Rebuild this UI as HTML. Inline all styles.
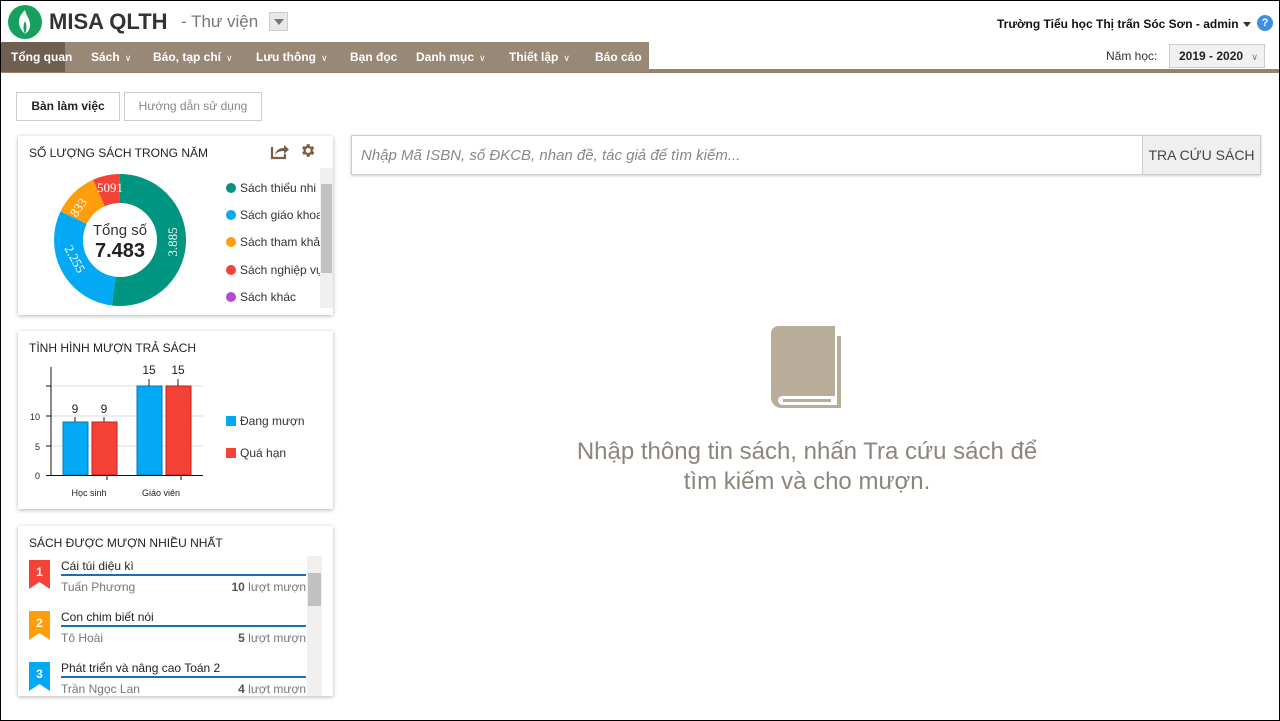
<!DOCTYPE html>
<html><head><meta charset="utf-8"><style>
*{box-sizing:border-box;margin:0;padding:0}
body{width:1280px;height:721px;overflow:hidden;background:#fff;font-family:"Liberation Sans","DejaVu Sans",sans-serif;color:#222;position:relative}
.frame{position:absolute;left:0;top:0;width:1280px;height:721px;border:1px solid #000;pointer-events:none;z-index:10}
.abs{position:absolute}
.nav{position:absolute;left:1px;top:42px;width:1278px;height:31px;border-bottom:4px solid #94836f}
.nav .bar{position:absolute;left:0;top:0;width:648px;height:30px;background:#9a8876}
.nav span{position:absolute;top:0;height:30px;line-height:31px;color:#fff;font-size:12px;font-weight:bold}
.nav small{font-weight:normal;font-size:9px;margin-left:5px}
.card{position:absolute;left:18px;width:315px;background:#fff;box-shadow:0 1px 4px rgba(0,0,0,.3)}
.ct{position:absolute;left:11px;top:10px;font-size:12px;color:#222}
.lg{position:absolute;font-size:12px;color:#333;white-space:nowrap}
.lg i{display:inline-block;width:10px;height:10px;border-radius:50%;margin-right:4px;vertical-align:-1px}
.sb{position:absolute;background:#f0f0f0}
</style></head><body>
<div class="frame"></div>
<svg class="abs" style="left:8px;top:5px" width="34" height="34" viewBox="0 0 34 34"><circle cx="17" cy="17" r="17" fill="#17a05d"/><path d="M17 5c-6 6-8 12-4 19 1 2 3 4 4 5-2-4-2-9 0-13 2 4 2 9 0 13 3-2 6-6 5-11-1-5-4-8-5-13z" fill="#fff"/></svg>
<div class="abs" style="left:49px;top:9px;font-size:22px;font-weight:bold;color:#333">MISA QLTH</div>
<div class="abs" style="left:181px;top:12px;font-size:17px;color:#777">- Thư viện</div>
<div class="abs" style="left:269px;top:12px;width:19px;height:19px;background:#e8e8e8;border:1px solid #ccc"><div style="margin:6px auto 0;width:0;height:0;border-left:5px solid transparent;border-right:5px solid transparent;border-top:6px solid #777"></div></div>
<div class="abs" style="left:997px;top:17px;font-size:12px;font-weight:bold;color:#111">Trường Tiểu học Thị trấn Sóc Sơn - admin</div>
<div class="abs" style="left:1243px;top:22px;width:0;height:0;border-left:4px solid transparent;border-right:4px solid transparent;border-top:5px solid #333"></div>
<div class="abs" style="left:1257px;top:15px;width:16px;height:16px;border-radius:50%;background:#3f8fe0;color:#fff;font-size:11px;font-weight:bold;text-align:center;line-height:16px">?</div>
<div class="nav"><div class="bar"></div>
<div class="abs" style="left:0;top:0;width:64px;height:30px;background:#6f5f50"></div>
<span style="left:10px">Tổng quan</span>
<span style="left:90px">Sách<small>∨</small></span>
<span style="left:152px">Báo, tạp chí<small>∨</small></span>
<span style="left:255px">Lưu thông<small>∨</small></span>
<span style="left:349px">Bạn đọc</span>
<span style="left:415px">Danh mục<small>∨</small></span>
<span style="left:508px">Thiết lập<small>∨</small></span>
<span style="left:594px">Báo cáo</span>
<div class="abs" style="left:1105px;top:7px;font-size:12px;color:#333">Năm học:</div>
<div class="abs" style="left:1168px;top:2px;width:96px;height:24px;border:1px solid #ccc;background:#f1f1f1;font-size:12px;font-weight:bold;color:#222;line-height:22px;padding-left:9px">2019 - 2020 <small style="font-weight:normal;font-size:9px;color:#777">∨</small></div>
</div>
<div class="abs" style="left:16px;top:92px;width:104px;height:29px;border:1px solid #ccc;font-size:12px;font-weight:bold;text-align:center;line-height:27px">Bàn làm việc</div>
<div class="abs" style="left:124px;top:92px;width:138px;height:29px;border:1px solid #ccc;font-size:12px;color:#888;text-align:center;line-height:27px">Hướng dẫn sử dụng</div>

<div class="card" style="top:136px;height:179px">
<div class="ct">SỐ LƯỢNG SÁCH TRONG NĂM</div>
<svg class="abs" style="left:252px;top:6px" width="20" height="18" viewBox="0 0 20 18"><path d="M2 5v11h13v-4" stroke="#7a5f48" stroke-width="2.2" fill="none"/><path d="M5 13c1-5 4-7 9-7V3l5 4.5-5 4.5V9c-4 0-7 1-9 4z" fill="#7a5f48"/></svg>
<svg class="abs" style="left:281px;top:6px" width="17" height="17" viewBox="0 0 24 24"><path fill="#7a5f48" d="M19.4 13a7.5 7.5 0 000-2l2.1-1.6-2-3.5-2.5 1a7 7 0 00-1.7-1L15 3h-4l-.4 2.7a7 7 0 00-1.7 1l-2.5-1-2 3.5L6.6 11a7.5 7.5 0 000 2l-2.2 1.6 2 3.5 2.5-1a7 7 0 001.7 1L11 21h4l.4-2.7a7 7 0 001.7-1l2.5 1 2-3.5zM13 15.5a3.5 3.5 0 110-7 3.5 3.5 0 010 7z"/></svg>
<div class="sb" style="left:302px;top:32px;width:13px;height:140px"><div style="position:absolute;left:1px;top:16px;width:11px;height:89px;background:#c1c1c1"></div></div>
</div>
<svg class="abs" style="left:50px;top:170px" width="140" height="140" viewBox="0 0 140 140">
<g transform="rotate(-90 70 70)" fill="none" stroke-width="29">
<circle cx="70" cy="70" r="51.5" stroke="#009580" stroke-dasharray="168 400" stroke-dashoffset="0"/>
<circle cx="70" cy="70" r="51.5" stroke="#03a9f4" stroke-dasharray="97.5 400" stroke-dashoffset="-168"/>
<circle cx="70" cy="70" r="51.5" stroke="#ff9d0b" stroke-dasharray="36 400" stroke-dashoffset="-265.5"/>
<circle cx="70" cy="70" r="51.5" stroke="#f44336" stroke-dasharray="21 400" stroke-dashoffset="-301.5"/>
<circle cx="70" cy="70" r="51.5" stroke="#b44ad6" stroke-dasharray="1.5 400" stroke-dashoffset="-322.3"/>
</g>
<text x="70" y="65" font-size="15" text-anchor="middle" fill="#333" font-family="Liberation Sans">Tổng số</text>
<text x="70" y="87" font-size="20" font-weight="bold" text-anchor="middle" fill="#222" font-family="Liberation Sans">7.483</text>
<text transform="translate(127 72) rotate(-90)" font-size="13" fill="#fff" text-anchor="middle" font-family="Liberation Serif">3.885</text>
<text transform="translate(21 91) rotate(62)" font-size="13" fill="#fff" text-anchor="middle" font-family="Liberation Serif">2.255</text>
<text transform="translate(32 40) rotate(-55)" font-size="13" fill="#fff" text-anchor="middle" font-family="Liberation Serif">833</text>
<text x="60" y="22" font-size="13" fill="#fff" text-anchor="middle" font-family="Liberation Serif">5091</text>
</svg>
<div class="lg" style="left:226px;top:181px"><i style="background:#009580"></i>Sách thiếu nhi</div>
<div class="lg" style="left:226px;top:208px;width:94px;overflow:hidden"><i style="background:#03a9f4"></i>Sách giáo khoa</div>
<div class="lg" style="left:226px;top:235px;width:94px;overflow:hidden"><i style="background:#ff9d0b"></i>Sách tham khảo</div>
<div class="lg" style="left:226px;top:263px;width:94px;overflow:hidden"><i style="background:#f44336"></i>Sách nghiệp vụ</div>
<div class="lg" style="left:226px;top:290px"><i style="background:#b44ad6"></i>Sách khác</div>

<div class="card" style="top:331px;height:178px">
<div class="ct">TÌNH HÌNH MƯỢN TRẢ SÁCH</div>
</div>
<svg class="abs" style="left:18px;top:331px" width="200" height="178" viewBox="0 0 200 178" font-family="Liberation Sans">
<g stroke="#ddd"><line x1="33" y1="55" x2="185" y2="55"/><line x1="33" y1="85" x2="185" y2="85"/><line x1="33" y1="115" x2="185" y2="115"/></g>
<rect x="45" y="91" width="25" height="53" fill="#03a9f4" stroke="#0a77b0"/>
<rect x="74" y="91" width="25" height="53" fill="#f44336" stroke="#c0201a"/>
<rect x="119" y="55" width="25" height="89" fill="#03a9f4" stroke="#0a77b0"/>
<rect x="148" y="55" width="25" height="89" fill="#f44336" stroke="#c0201a"/>
<g stroke="#222"><line x1="57" y1="86" x2="57" y2="91"/><line x1="86" y1="86" x2="86" y2="91"/><line x1="131" y1="48" x2="131" y2="55"/><line x1="160" y1="48" x2="160" y2="55"/></g>
<g font-size="12" text-anchor="middle" fill="#222"><text x="57" y="82">9</text><text x="86" y="82">9</text><text x="131" y="43">15</text><text x="160" y="43">15</text></g>
<line x1="33" y1="36" x2="33" y2="145" stroke="#111"/><line x1="28" y1="144.5" x2="185" y2="144.5" stroke="#111"/>
<g stroke="#111"><line x1="28" y1="55" x2="33" y2="55"/><line x1="28" y1="85" x2="33" y2="85"/><line x1="28" y1="115" x2="33" y2="115"/><line x1="89" y1="144" x2="89" y2="149"/><line x1="163" y1="144" x2="163" y2="149"/></g>
<g font-size="9" fill="#222" text-anchor="end"><text x="22" y="89">10</text><text x="22" y="119">5</text><text x="22" y="148">0</text></g>
<g font-size="9" fill="#222" text-anchor="middle"><text x="71" y="165">Học sinh</text><text x="143" y="165">Giáo viên</text></g>
</svg>
<div class="lg" style="left:226px;top:414px"><i style="background:#03a9f4;border-radius:0"></i>Đang mượn</div>
<div class="lg" style="left:226px;top:446px"><i style="background:#f44336;border-radius:0"></i>Quá hạn</div>

<div class="card" style="top:526px;height:170px">
<div class="ct">SÁCH ĐƯỢC MƯỢN NHIỀU NHẤT</div>
<div class="sb" style="left:289px;top:30px;width:15px;height:140px"><div style="position:absolute;left:1px;top:17px;width:13px;height:33px;background:#c1c1c1"></div></div>
</div>
<svg class="abs" style="left:29px;top:560px" width="22" height="140" viewBox="0 0 22 140" font-family="Liberation Sans" font-weight="bold" font-size="12">
<path d="M0 0h21v29l-10.5-7L0 29z" fill="#f44336"/><text x="10.5" y="16" fill="#fff" text-anchor="middle">1</text>
<path d="M0 51h21v29l-10.5-7L0 80z" fill="#ff9d0b"/><text x="10.5" y="67" fill="#fff" text-anchor="middle">2</text>
<path d="M0 102h21v29l-10.5-7L0 131z" fill="#03a9f4"/><text x="10.5" y="118" fill="#fff" text-anchor="middle">3</text>
</svg>
<div class="abs" style="left:61px;top:559px;width:245px;height:17px;border-bottom:2px solid #1a6fb0;font-size:12px">Cái túi diệu kì</div>
<div class="abs" style="left:61px;top:580px;font-size:12px;color:#777">Tuấn Phương</div>
<div class="abs" style="left:200px;top:580px;width:106px;text-align:right;font-size:12px;color:#777"><b style="color:#555">10</b> lượt mượn</div>
<div class="abs" style="left:61px;top:610px;width:245px;height:17px;border-bottom:2px solid #1a6fb0;font-size:12px">Con chim biết nói</div>
<div class="abs" style="left:61px;top:631px;font-size:12px;color:#777">Tô Hoài</div>
<div class="abs" style="left:200px;top:631px;width:106px;text-align:right;font-size:12px;color:#777"><b style="color:#555">5</b> lượt mượn</div>
<div class="abs" style="left:61px;top:661px;width:245px;height:17px;border-bottom:2px solid #1a6fb0;font-size:12px">Phát triển và nâng cao Toán 2</div>
<div class="abs" style="left:61px;top:682px;font-size:12px;color:#777">Trần Ngọc Lan</div>
<div class="abs" style="left:200px;top:682px;width:106px;text-align:right;font-size:12px;color:#777"><b style="color:#555">4</b> lượt mượn</div>

<div class="abs" style="left:351px;top:135px;width:910px;height:40px;border:1px solid #ccc;box-shadow:0 1px 3px rgba(0,0,0,.2)">
<div class="abs" style="left:9px;top:11px;font-size:15px;font-style:italic;color:#888">Nhập Mã ISBN, số ĐKCB, nhan đề, tác giả để tìm kiếm...</div>
<div class="abs" style="left:790px;top:0;width:118px;height:38px;background:#efefef;border-left:1px solid #ccc;font-size:14px;color:#444;text-align:center;line-height:38px">TRA CỨU SÁCH</div>
</div>
<svg class="abs" style="left:770px;top:326px" width="72" height="84" viewBox="0 0 72 84">
<path d="M9 0h56v70H13c-3 0-5 2-5 4.5S10 79 13 79h54V10h4v72H12C5 82 1 77 1 71V8C1 3 4 0 9 0z" fill="#b7ad98"/>
<rect x="13" y="73" width="48" height="3" fill="#b7ad98"/>
</svg>
<div class="abs" style="left:567px;top:437px;width:480px;text-align:center;font-size:24px;color:#8c857b;line-height:30px">Nhập thông tin sách, nhấn Tra cứu sách để tìm kiếm và cho mượn.</div>
</body></html>
